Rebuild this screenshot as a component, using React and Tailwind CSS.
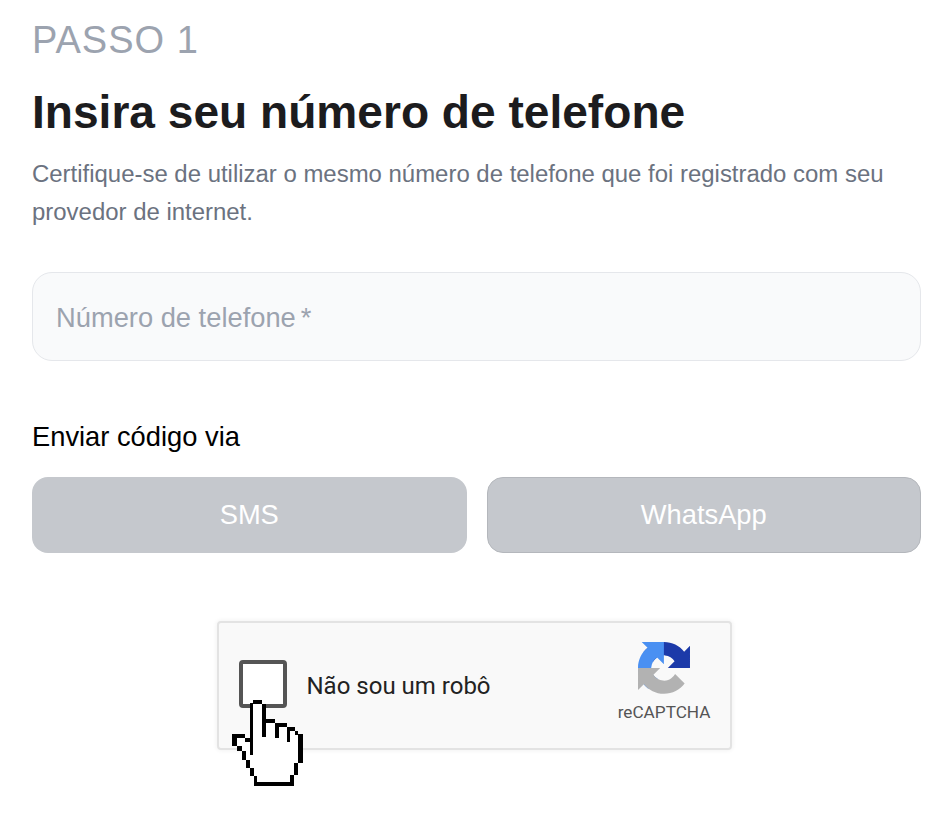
const Hand = () => (
  <svg viewBox="60 265 225 270" className="absolute left-[11px] top-[75px] w-[75px] h-[90px]" shapeRendering="crispEdges">
    <path
      fill="#fff"
      d="M65 380H105V390H120V280H130V270H155V285H167V328H195V342H230V355H255V365H265V375H278V460H265V495H252V530H132V500H120V475H108V450H95V425H80V410H65Z"
    />
    <path
      fill="#000"
      d="M130 270H155V282H130ZM120 280H130V437H120ZM155 282H167V383H155ZM167 328H195V340H167ZM195 340H207V386H195ZM207 340H230V352H207ZM230 352H240V397H230ZM240 352H255V364H240ZM255 364H265V376H255ZM265 374H278V460H265ZM252 460H265V495H252ZM240 495H252V530H240ZM132 518H240V530H132ZM132 500H142V518H132ZM120 475H132V500H120ZM108 450H120V475H108ZM95 425H108V450H95ZM80 410H95V425H80ZM65 372H105V385H80V410H65ZM105 385H120V397H105Z"
    />
  </svg>
);

const RecaptchaLogo = () => (
  <svg viewBox="0 0 64 64" className="w-[52px] h-[52px]">
    <path fill="#1c3aa9" d="M64 31.955l-.033-1.37V4.687l-7.16 7.16C50.948 4.674 42.033.093 32.05.093c-10.4 0-19.622 4.96-25.458 12.64l11.736 11.86a15.55 15.55 0 0 1 4.754-5.334c2.05-1.6 4.952-2.906 8.968-2.906.485 0 .86.057 1.135.163 4.976.393 9.288 3.14 11.828 7.124l-8.307 8.307L63.997 32" />
    <path fill="#4a90f2" d="M31.862 0l-1.37.033H4.594l7.16 7.16C4.58 13.052 0 21.967 0 31.95c0 10.4 4.96 19.622 12.64 25.458L24.5 45.672a15.55 15.55 0 0 1-5.334-4.754c-1.6-2.05-2.906-4.952-2.906-8.968 0-.485.057-.86.163-1.135.393-4.976 3.14-9.288 7.124-11.828l8.307 8.307L31.906.004" />
    <path fill="#b2b2b2" d="M.002 31.953l.033 1.37v25.898l7.16-7.16c5.86 7.173 14.774 11.754 24.76 11.754 10.4 0 19.622-4.96 25.458-12.64L45.677 39.32a15.55 15.55 0 0 1-4.754 5.334c-2.05 1.6-4.952 2.906-8.968 2.906-.485 0-.86-.057-1.135-.163-4.976-.393-9.288-3.14-11.828-7.124l8.307-8.307L.002 31.953" />
  </svg>
);

const App = () => {
  return (
    <div className="min-h-screen bg-white pl-8 pr-[27px] pt-[16px] font-['Liberation_Sans',Arial,sans-serif]">
      <p className="text-[38px] leading-[48px] tracking-[1px] text-[#9ca3af]">PASSO 1</p>
      <h1 className="mt-[22px] text-[46.1px] leading-[52px] font-bold text-[#1c1c1e]">Insira seu número de telefone</h1>
      <p className="mt-[17px] text-[23.95px] leading-[38px] text-[#6b7280]">
        Certifique-se de utilizar o mesmo número de telefone que foi registrado com seu provedor de internet.
      </p>

      {/* Phone input */}
      <div className="mt-[41px] h-[89px] flex items-center px-[23px] pt-[4px] bg-[#f9fafb] border border-[#e5e7eb] rounded-[20px]">
        <span className="text-[27.3px] text-[#9ca3af]">Número de telefone<span className="ml-[5px]">*</span></span>
      </div>

      <p className="mt-[60px] text-[27.3px] leading-[32px] text-black">Enviar código via</p>

      <div className="mt-[24px] grid grid-cols-2 gap-5">
        <button className="h-[76px] rounded-[16px] bg-[#c5c8cd] text-white text-[27.3px]">SMS</button>
        <button className="h-[76px] rounded-[16px] bg-[#c5c8cd] border border-[#b4b7bc] text-white text-[27.3px]">WhatsApp</button>
      </div>

      {/* Captcha */}
      <div className="flex justify-center mt-[68px] pr-[5px]">
        <div className="relative w-[515px] h-[129px] flex items-center bg-[#f9f9f9] border-2 border-[#e3e3e3] rounded-[4px] shadow-[0_0_4px_1px_rgba(0,0,0,0.05)] pl-[20px] pr-[19px]">
          <div className="w-[48px] h-[48px] mb-[3px] bg-white border-[4px] border-[#555] rounded-[4px]" />
          <span className="ml-[20px] text-[24px] text-[#222] font-['Roboto',sans-serif]">Não sou um robô</span>
          <div className="ml-auto flex flex-col items-center pb-[8px]">
            <RecaptchaLogo />
            <span className="mt-[8px] text-[17.2px] leading-[20px] text-[#555] font-['Roboto',sans-serif]">reCAPTCHA</span>
          </div>
          <Hand />
        </div>
      </div>
    </div>
  );
};

export default App;
